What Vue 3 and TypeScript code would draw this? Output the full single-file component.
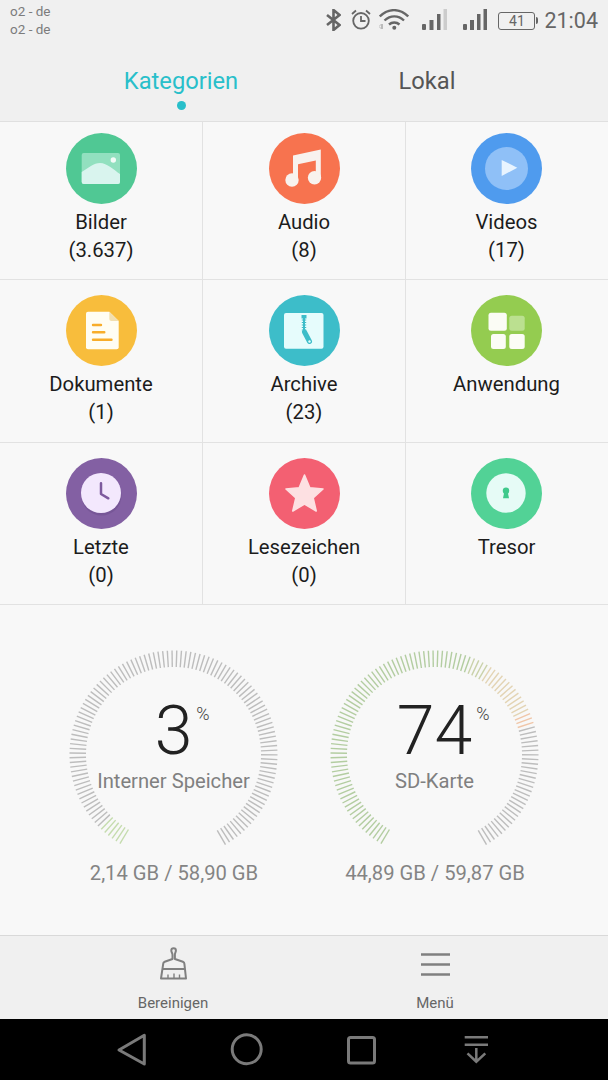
<script setup lang="ts">
interface Cat { key: string; label: string; count?: string; color: string }
const cats: Cat[] = [
  { key: 'bilder', label: 'Bilder', count: '(3.637)', color: '#50c894' },
  { key: 'audio', label: 'Audio', count: '(8)', color: '#f7734f' },
  { key: 'videos', label: 'Videos', count: '(17)', color: '#4f9bee' },
  { key: 'doc', label: 'Dokumente', count: '(1)', color: '#f8bd3c' },
  { key: 'archive', label: 'Archive', count: '(23)', color: '#3dbdc9' },
  { key: 'app', label: 'Anwendung', color: '#94cc50' },
  { key: 'recent', label: 'Letzte', count: '(0)', color: '#8360a3' },
  { key: 'star', label: 'Lesezeichen', count: '(0)', color: '#f36072' },
  { key: 'safe', label: 'Tresor', color: '#52d296' },
]

const CX = 104.5
const STEP = 2.6
const START = -149
const COUNT = Math.round(298 / STEP) + 1

function ticks(color: (deg: number) => string) {
  const out = []
  for (let i = 0; i < COUNT; i++) {
    const deg = START + i * STEP
    const a = (deg * Math.PI) / 180
    const s = Math.sin(a)
    const c = Math.cos(a)
    out.push({
      x1: CX + 87.5 * s,
      y1: CX - 87.5 * c,
      x2: CX + 104 * s,
      y2: CX - 104 * c,
      stroke: color(deg),
    })
  }
  return out
}

const GRAY = '#bdbdbd'
const leftTicks = ticks((d) => (d < START + 15 ? '#c5dcae' : GRAY))
const rightTicks = ticks((d) => {
  if (d > 73) return GRAY
  if (d > 66) return '#f0c6a8'
  if (d > 32) return '#e3d4b4'
  if (d > 20) return '#cad2aa'
  return '#b3cda1'
})

const gauges = [
  { value: '3', label: 'Interner Speicher', usage: '2,14 GB / 58,90 GB', ticks: leftTicks },
  { value: '74', label: 'SD-Karte', usage: '44,89 GB / 59,87 GB', ticks: rightTicks },
]
</script>

<template>
  <div class="phone">
    <header class="top">
      <div class="status">
        <div class="carriers">
          <div>o2 - de</div>
          <div>o2 - de</div>
        </div>
        <div class="status-icons">
          <svg class="i-bt" width="15" height="22" viewBox="0 0 15 22" fill="none" stroke="#666" stroke-width="2.6">
            <path d="M1 6l12.5 10L7.5 21V1l6 5L1 16" />
          </svg>
          <svg class="i-alarm" width="20" height="21" viewBox="0 0 20 21" fill="none" stroke="#666" stroke-width="1.8">
            <circle cx="10" cy="11.8" r="7.8" />
            <path d="M10 7v5h4.5M1 5l4-3.5M19 5l-4-3.5" />
          </svg>
          <svg class="i-wifi" width="30" height="21" viewBox="0 0 30 21" fill="none" stroke="#666" stroke-width="2.4">
            <path d="M.8 7.500C9 -1 21 -1 29.200 7.500M5.500 11.500c5.800-5.500 13.800-5.500 19.500 0M10 15.500c3-2.700 7.500-2.700 10.500 0" />
            <circle cx="15.300" cy="18.700" r="2" fill="#666" stroke="none" />
            <path d="M0 17.500l2.500-2.500v5zM3.500 15v5" stroke="#bbb" stroke-width="1" />
          </svg>
          <svg class="i-sig" width="25" height="21" viewBox="0 0 25 21">
            <rect x="0" y="15" width="4" height="6" rx="1" fill="#666" />
            <rect x="7.500" y="11" width="4" height="10" fill="#666" />
            <rect x="15" y="5" width="3.500" height="16" fill="#666" />
            <rect x="21.500" y="0" width="3.500" height="21" fill="#ccc" />
          </svg>
          <svg class="i-sig2" width="25" height="21" viewBox="0 0 25 21">
            <rect x="0" y="15" width="4" height="6" rx="1" fill="#666" />
            <rect x="7" y="11" width="4" height="10" fill="#666" />
            <rect x="14" y="5" width="3.500" height="16" fill="#666" />
            <rect x="20.500" y="0" width="3.500" height="21" fill="#666" />
          </svg>
          <div class="battery"><span>41</span></div>
          <div class="time">21:04</div>
        </div>
      </div>
      <nav class="tabs">
        <div class="tab active">Kategorien<i class="dot"></i></div>
        <div class="tab">Lokal</div>
      </nav>
    </header>

    <section class="grid">
      <div v-for="c in cats" :key="c.key" class="cell">
        <svg class="cat-icon" width="71" height="71" viewBox="0 0 71 71">
          <circle cx="35.500" cy="35.500" r="35.500" :fill="c.color" />
          <template v-if="c.key === 'bilder'">
            <rect x="15.700" y="20" width="38.300" height="31" rx="2" fill="#92e0bf" />
            <path d="M15.700 39C22 35 28 30 34 30C41 30 48 37 54 41V49a2 2 0 0 1-2 2H17.700a2 2 0 0 1-2-2Z" fill="#d9f4ee" />
            <circle cx="47.300" cy="27" r="2.700" fill="#f4fbf8" />
          </template>
          <template v-else-if="c.key === 'audio'">
            <path d="M24 22.500L51.800 16.500V45H46.800V27.500L29 31.200V47.500H24Z" fill="#f8f2ee" />
            <circle cx="23" cy="47" r="6.700" fill="#f8f2ee" />
            <circle cx="45.500" cy="44.700" r="6.700" fill="#f8f2ee" />
          </template>
          <template v-else-if="c.key === 'videos'">
            <circle cx="35.500" cy="35.500" r="21.500" fill="#8fc0f7" />
            <path d="M30.700 27L46.300 34.700L30.700 43Z" fill="#e8f4ff" />
          </template>
          <template v-else-if="c.key === 'doc'">
            <path d="M22 16.700H43.300L52.700 26V52.300a2 2 0 0 1-2 2H22a2 2 0 0 1-2-2V18.700a2 2 0 0 1 2-2Z" fill="#fffdf3" />
            <path d="M43.300 16.700L52.700 26H45.300a2 2 0 0 1-2-2Z" fill="#f2dfb0" />
            <path d="M27 30H35M27 37.300H38.300M27 44.700H45.500" stroke="#f8ad2a" stroke-width="2.400" stroke-linecap="round" />
          </template>
          <template v-else-if="c.key === 'archive'">
            <rect x="15" y="18" width="39.500" height="35.700" rx="2" fill="#e6fcfc" />
            <rect x="32.500" y="20" width="5" height="3.500" fill="#3dbdc9" />
            <path d="M35 23V37" stroke="#3dbdc9" stroke-width="2" />
            <path d="M32.800 25H37.200M32.800 27.500H37.200M32.800 30H37.200M32.800 32.500H37.200M32.800 35H37.200" stroke="#3dbdc9" stroke-width="1.200" />
            <path d="M35.500 37L40.500 46.500" stroke="#3dbdc9" stroke-width="5" stroke-linecap="round" />
            <circle cx="40.500" cy="46.500" r="1.200" fill="#e6fcfc" />
          </template>
          <template v-else-if="c.key === 'app'">
            <rect x="17.500" y="17.700" width="18.300" height="18" rx="2.500" fill="#fbfcf5" />
            <rect x="38.300" y="20.700" width="15.400" height="15" rx="2.500" fill="#bbe090" />
            <rect x="20" y="39" width="14.800" height="15" rx="2.500" fill="#fbfcf5" />
            <rect x="38.300" y="39" width="15.400" height="15" rx="2.500" fill="#fbfcf5" />
          </template>
          <template v-else-if="c.key === 'recent'">
            <circle cx="35.500" cy="37.500" r="20" fill="#6e4e8e" opacity=".55" />
            <circle cx="35" cy="35" r="20" fill="#f3e8fd" />
            <path d="M35 25.300V36L42.300 40.300" fill="none" stroke="#7d5a9e" stroke-width="2.500" stroke-linecap="round" stroke-linejoin="round" />
          </template>
          <template v-else-if="c.key === 'star'">
            <path d="M35.500 17L40.800 29.700L54 31L44.100 39.800L47.200 53L35.500 46L23.800 53L26.900 39.800L17 31L30.200 29.700Z" fill="#fde0e2" stroke="#fde0e2" stroke-width="1.600" stroke-linejoin="round" />
          </template>
          <template v-else>
            <circle cx="35" cy="35" r="19.700" fill="#e6fbf6" />
            <circle cx="35" cy="32.700" r="3.200" fill="#3fc98b" />
            <path d="M33.500 33H36.500L38 40.300H32Z" fill="#3fc98b" />
          </template>
        </svg>
        <div class="cat-label">{{ c.label }}</div>
        <div v-if="c.count" class="cat-label">{{ c.count }}</div>
      </div>
    </section>

    <section class="storage">
      <div v-for="g in gauges" :key="g.label" class="gauge">
        <div class="dial">
          <svg class="ticks" width="209" height="209" viewBox="0 0 209 209">
            <line
              v-for="(t, i) in g.ticks"
              :key="i"
              :x1="t.x1"
              :y1="t.y1"
              :x2="t.x2"
              :y2="t.y2"
              :stroke="t.stroke"
              stroke-width="1.400"
            />
          </svg>
          <div class="dial-text">
            <div class="value">{{ g.value }}<sup class="pct">%</sup></div>
            <div class="dial-label">{{ g.label }}</div>
          </div>
        </div>
        <div class="usage">{{ g.usage }}</div>
      </div>
    </section>

    <footer class="actions">
      <div class="action">
        <svg width="29" height="33" viewBox="0 0 29 33" fill="none" stroke="#808080" stroke-width="2" stroke-linejoin="round">
          <path d="M12.300 3.500a2.300 2.300 0 0 1 4.600 0c0 2-1.200 2.500-1 4.500V12l8 2.800c1 .4 1.500 1 1.500 2L27 31.500H2l2.200-14.700c0-1 .5-1.600 1.500-2l7.800-2.800V8c.2-2-1.200-2.500-1.200-4.500Z" />
          <path d="M3.500 22H25.500" />
          <path d="M9 27.500V31M15 26.500V31M20.500 27.500V31" stroke-width="1.400" />
        </svg>
        <span>Bereinigen</span>
      </div>
      <div class="action">
        <svg width="29" height="33" viewBox="0 0 29 33" stroke="#808080" stroke-width="2.500">
          <path d="M0 7.500H29M0 17.500H29M0 27.500H29" />
        </svg>
        <span>Menü</span>
      </div>
    </footer>

    <nav class="sysnav">
      <svg width="115" height="61" viewBox="0 0 115 61" fill="none" stroke="#7a7a7a" stroke-width="3" stroke-linejoin="round">
        <path d="M45 31L70.300 16.300V45Z" />
      </svg>
      <svg width="115" height="61" viewBox="0 0 115 61" fill="none" stroke="#7a7a7a" stroke-width="3">
        <circle cx="57.700" cy="30.300" r="14.500" />
      </svg>
      <svg width="115" height="61" viewBox="0 0 115 61" fill="none" stroke="#7a7a7a" stroke-width="3">
        <rect x="44.500" y="18.500" width="26" height="25.500" rx="2" />
      </svg>
      <svg width="115" height="61" viewBox="0 0 115 61" fill="none" stroke="#7a7a7a" stroke-width="2.500">
        <path d="M45.700 18.300H69M45.700 25.700H69M57.300 29V42.500M48.500 34.300L57.300 42.700L66.300 34.300" />
      </svg>
    </nav>
  </div>
</template>

<style scoped>
.phone {
  width: 608px;
  height: 1080px;
  display: flex;
  flex-direction: column;
  background: #f8f8f8;
  font-family: Roboto, "Liberation Sans", sans-serif;
  overflow: hidden;
}
.top {
  height: 122px;
  box-sizing: border-box;
  background: #f0f0f0;
  border-bottom: 1px solid #e0e0e0;
  flex: none;
}
.status {
  height: 44px;
  display: flex;
  justify-content: space-between;
  padding: 2px 10px 0;
}
.carriers {
  font-size: 13.500px;
  line-height: 18px;
  color: #7c7c7c;
}
.status-icons {
  display: flex;
  align-items: flex-start;
  padding-top: 7px;
}
.status-icons svg {
  display: block;
  flex: none;
}
.i-alarm { margin-left: 10px; }
.i-wifi { margin-left: 8px; }
.i-sig { margin-left: 13px; }
.i-sig2 { margin-left: 16px; }
.battery {
  margin-left: 10px;
  margin-top: 3px;
  width: 37px;
  height: 18px;
  box-sizing: border-box;
  border: 1.500px solid #666;
  border-radius: 3px;
  display: flex;
  align-items: center;
  justify-content: center;
  position: relative;
}
.battery::after {
  content: "";
  position: absolute;
  right: -4px;
  top: 4px;
  width: 2px;
  height: 7px;
  background: #666;
  border-radius: 0 2px 2px 0;
}
.battery span {
  font-size: 14px;
  color: #666;
}
.time {
  margin-left: 9px;
  font-size: 21.500px;
  line-height: 24px;
  color: #666;
}
.tabs {
  height: 77px;
  display: flex;
  padding-left: 58px;
}
.tab {
  width: 246px;
  text-align: center;
  font-size: 23.700px;
  line-height: 28px;
  padding-top: 21px;
  color: #555;
  position: relative;
}
.tab.active {
  color: #29bfca;
}
.dot {
  position: absolute;
  left: 118.500px;
  top: 55px;
  width: 9px;
  height: 9px;
  border-radius: 50%;
  background: #29bfca;
}
.grid {
  flex: none;
  display: grid;
  grid-template-columns: 203px 203px 202px;
  grid-template-rows: 158px 163px 162px;
}
.cell {
  box-sizing: border-box;
  border-right: 1px solid #e2e2e2;
  border-bottom: 1px solid #e2e2e2;
  padding-top: 15px;
  text-align: center;
}
.cell:nth-child(3n) {
  border-right: 0;
  padding-right: 1px;
}
.cell:nth-child(-n + 3) {
  padding-top: 11px;
}
.cat-icon {
  display: block;
  margin: 0 auto 4px;
}
.cat-label {
  font-size: 20.300px;
  line-height: 28px;
  color: #1c1c1c;
  white-space: nowrap;
}
.storage {
  flex: 1;
  display: flex;
  gap: 52px;
  padding: 45px 0 0 69px;
  box-sizing: border-box;
}
.gauge {
  width: 209px;
  text-align: center;
}
.dial {
  position: relative;
  width: 209px;
  height: 209px;
}
.ticks {
  position: absolute;
  inset: 0;
}
.dial-text {
  position: relative;
  padding-top: 42px;
}
.value {
  font-size: 68px;
  font-weight: 300;
  line-height: 78px;
  color: #222;
  position: relative;
  display: inline-block;
}
.pct {
  position: absolute;
  left: 100%;
  top: 12px;
  margin-left: 4px;
  font-size: 18px;
  line-height: 20px;
  font-weight: 300;
  color: #444;
}
.dial-label {
  font-size: 20.200px;
  line-height: 26px;
  color: #808080;
  white-space: nowrap;
  margin-top: -2px;
}
.usage {
  margin-top: 1px;
  padding-left: 1px;
  font-size: 20.200px;
  line-height: 26px;
  color: #848484;
  white-space: nowrap;
}
.actions {
  flex: none;
  height: 84px;
  box-sizing: border-box;
  background: #f0f0f0;
  border-top: 1px solid #d9d9d9;
  display: flex;
  padding-left: 42px;
}
.action {
  width: 262px;
  display: flex;
  flex-direction: column;
  align-items: center;
  padding-top: 11px;
}
.action svg {
  display: block;
}
.action span {
  margin-top: 13px;
  font-size: 15px;
  line-height: 20px;
  color: #666;
}
.sysnav {
  flex: none;
  height: 61px;
  background: #000;
  display: flex;
  padding-left: 74px;
}
.sysnav svg {
  display: block;
  flex: none;
}
</style>
